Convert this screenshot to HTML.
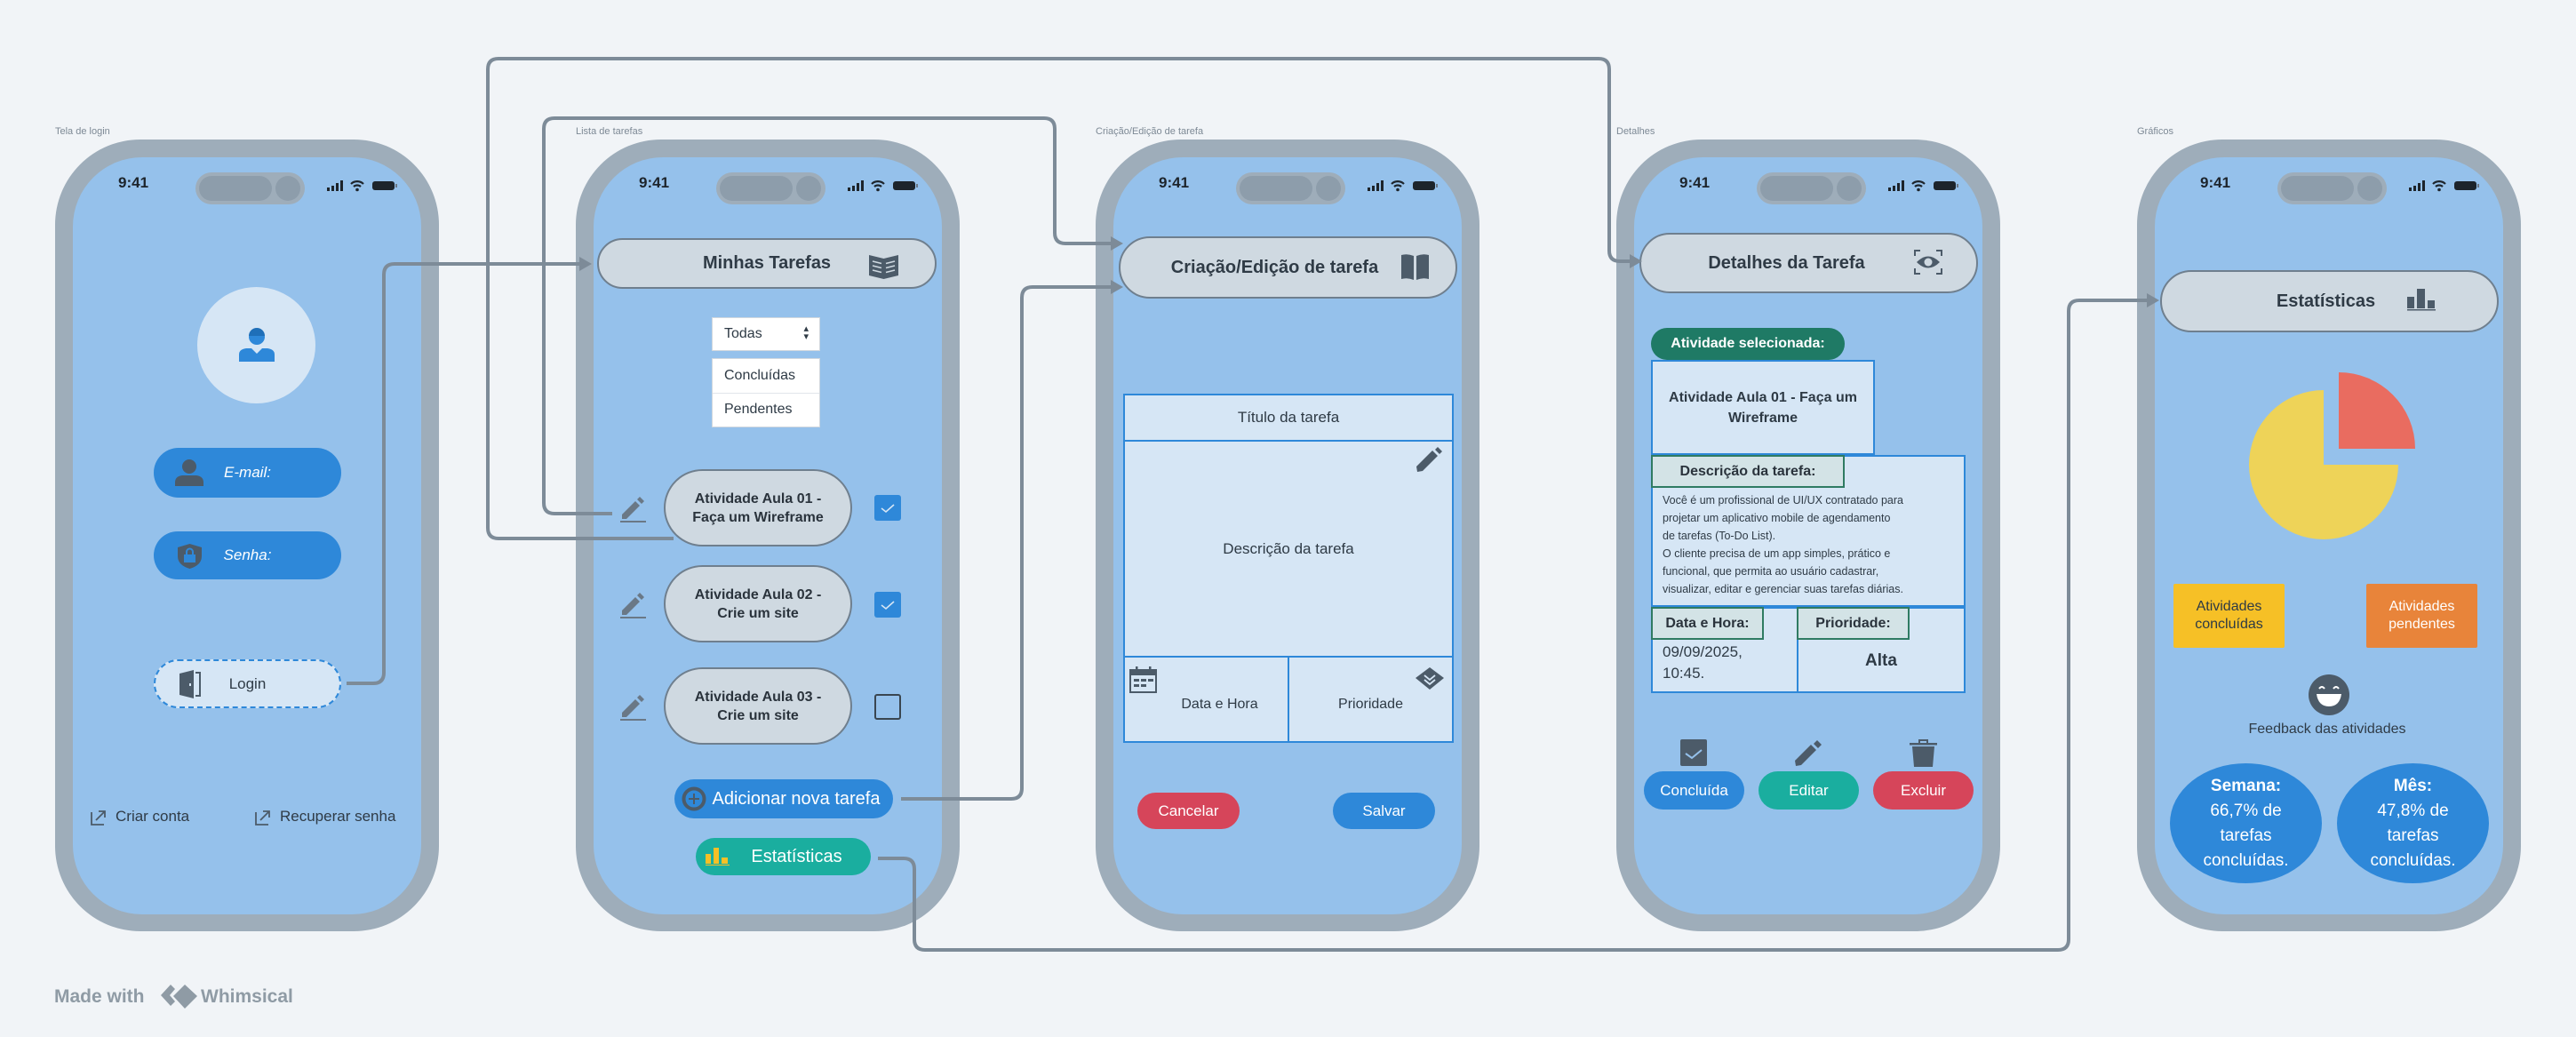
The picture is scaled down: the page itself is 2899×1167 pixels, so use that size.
<!DOCTYPE html>
<html><head><meta charset="utf-8">
<style>
*{margin:0;padding:0;box-sizing:border-box}
body{width:2899px;height:1167px;background:#f1f4f7;font-family:"Liberation Sans",sans-serif;position:relative;overflow:hidden;color:#2e3a45}
.lbl{position:absolute;font-size:11px;color:#7d8995;top:142px}
.ph{position:absolute;top:157px;width:432px;height:891px;background:#9eadba;border-radius:96px}
.sc{position:absolute;left:20px;top:20px;width:392px;height:852px;background:#95c1eb;border-radius:78px}
.a{position:absolute}
.time{position:absolute;left:71px;top:39px;font-size:17px;font-weight:bold;color:#1d242b}
.isl{position:absolute;left:158px;top:37px;width:123px;height:36px;background:#9eadba;border-radius:18px}
.isl i{position:absolute;top:4px;height:28px;background:#8d9dab;border-radius:14px}
.hdr{position:absolute;left:26px;background:#cfd9e1;border:2px solid #6f7f8e;border-radius:40px;font-weight:bold;font-size:20px;color:#2f3b46;display:flex;align-items:center;justify-content:center}
.pill{position:absolute;border-radius:30px;color:#fff;display:flex;align-items:center;justify-content:center;font-size:17px}
.task{position:absolute;left:99px;width:212px;height:87px;background:#cfd9e1;border:2px solid #6f7f8e;border-radius:44px;font-weight:bold;font-size:16px;text-align:center;display:flex;align-items:center;justify-content:center;line-height:21px;color:#2a333c}
.cb{position:absolute;left:336px;width:30px;height:29px;border-radius:3px;background:#2e88d9}
.box{position:absolute;background:#d6e6f5;border:2px solid #2e88d9}
.tl{position:absolute;background:#d3e3e6;border:2px solid #2f7b62;font-weight:bold;font-size:16px;display:flex;align-items:center;justify-content:center;color:#2a333c}
.c{display:flex;align-items:center;justify-content:center;text-align:center}
</style></head><body>

<div class="lbl" style="left:62px">Tela de login</div>
<div class="lbl" style="left:648px">Lista de tarefas</div>
<div class="lbl" style="left:1233px">Criação/Edição de tarefa</div>
<div class="lbl" style="left:1819px">Detalhes</div>
<div class="lbl" style="left:2405px">Gráficos</div>

<!-- status bar template repeated -->
<!-- PHONE 1 -->
<div class="ph" style="left:62px"><div class="sc"></div>
<div class="time">9:41</div><div class="isl"><i style="left:4px;width:82px"></i><i style="left:90px;width:28px"></i></div>
<svg class="a" style="left:306px;top:45px" width="80" height="14" viewBox="0 0 80 14"><rect x="0" y="9" width="3" height="4" fill="#1d242b"/><rect x="5" y="7" width="3" height="6" fill="#1d242b"/><rect x="10" y="4" width="3" height="9" fill="#1d242b"/><rect x="15" y="1" width="3" height="12" fill="#1d242b"/><path d="M27 5a10 10 0 0 1 14 0M30 8a6 6 0 0 1 8 0" stroke="#1d242b" stroke-width="2.2" fill="none"/><circle cx="34" cy="11.5" r="1.8" fill="#1d242b"/><rect x="51" y="2" width="25" height="10" rx="3" fill="#1d242b"/><rect x="77" y="5" width="2" height="4" fill="#6b7785"/></svg>
<div class="a" style="left:160px;top:166px;width:133px;height:131px;border-radius:50%;background:#d6e6f5"></div>
<svg class="a" style="left:207px;top:210px" width="40" height="40" viewBox="0 0 40 40"><circle cx="20" cy="12" r="9" fill="#2e88d9"/><path d="M11 11a9 9 0 0 1 18 0z" fill="#1f6fb8"/><path d="M0 40v-8q0-6 8-7h6l6 6 6-6h6q8 1 8 7v8z" fill="#2e88d9"/></svg>
<div class="pill" style="left:111px;top:347px;width:211px;height:56px;background:#2e88d9;font-style:italic">E-mail:</div>
<svg class="a" style="left:135px;top:360px" width="32" height="30" viewBox="0 0 32 30"><circle cx="16" cy="8" r="8" fill="#4c5b69"/><path d="M0 30v-4q0-7 8-8h16q8 1 8 8v4z" fill="#4c5b69"/></svg>
<div class="pill" style="left:111px;top:441px;width:211px;height:54px;background:#2e88d9;font-style:italic">Senha:</div>
<svg class="a" style="left:138px;top:455px" width="27" height="28" viewBox="0 0 27 28"><path d="M0 4l13.5-4 13.5 4v10q0 10-13.5 14Q0 24 0 14z" fill="#4c5b69"/><rect x="7" y="12" width="13" height="9" fill="#2e88d9"/><path d="M10 12v-3a3.5 3.5 0 0 1 7 0v3" stroke="#2e88d9" stroke-width="2" fill="none"/></svg>
<div class="pill" style="left:111px;top:585px;width:211px;height:55px;background:#d6e6f5;border:2px dashed #2e88d9;color:#2f3b46">Login</div>
<svg class="a" style="left:140px;top:597px" width="26" height="32" viewBox="0 0 26 32"><path d="M0 4l16-4v32L0 28z" fill="#4c5b69"/><rect x="11" y="15" width="2" height="3" fill="#d6e6f5"/><path d="M18 3h5v26h-5" stroke="#4c5b69" stroke-width="2" fill="none"/></svg>
<svg class="a" style="left:39px;top:753px" width="20" height="20" viewBox="0 0 20 20"><path d="M2 4v14h14" stroke="#4c5b69" stroke-width="1.8" fill="none"/><path d="M7 13l10-10M10 3h7v7" stroke="#4c5b69" stroke-width="1.8" fill="none"/></svg>
<div class="a" style="left:68px;top:752px;font-size:17px;color:#2f3b46">Criar conta</div>
<svg class="a" style="left:224px;top:753px" width="20" height="20" viewBox="0 0 20 20"><path d="M2 4v14h14" stroke="#4c5b69" stroke-width="1.8" fill="none"/><path d="M7 13l10-10M10 3h7v7" stroke="#4c5b69" stroke-width="1.8" fill="none"/></svg>
<div class="a" style="left:253px;top:752px;font-size:17px;color:#2f3b46">Recuperar senha</div>
</div>

<!-- PHONE 2 -->
<div class="ph" style="left:648px"><div class="sc"></div>
<div class="time">9:41</div><div class="isl"><i style="left:4px;width:82px"></i><i style="left:90px;width:28px"></i></div>
<svg class="a" style="left:306px;top:45px" width="80" height="14" viewBox="0 0 80 14"><rect x="0" y="9" width="3" height="4" fill="#1d242b"/><rect x="5" y="7" width="3" height="6" fill="#1d242b"/><rect x="10" y="4" width="3" height="9" fill="#1d242b"/><rect x="15" y="1" width="3" height="12" fill="#1d242b"/><path d="M27 5a10 10 0 0 1 14 0M30 8a6 6 0 0 1 8 0" stroke="#1d242b" stroke-width="2.2" fill="none"/><circle cx="34" cy="11.5" r="1.8" fill="#1d242b"/><rect x="51" y="2" width="25" height="10" rx="3" fill="#1d242b"/><rect x="77" y="5" width="2" height="4" fill="#6b7785"/></svg>
<div class="hdr" style="top:111px;width:382px;height:57px;left:24px">Minhas Tarefas</div>
<svg class="a" style="left:330px;top:127px" width="33" height="30" viewBox="0 0 33 30"><path d="M0 3l16.5 4 16.5-4v23l-16.5 4L0 26z" fill="#4c5b69"/><path d="M4 10l10 2.5M4 15l10 2.5M4 20l10 2.5M29 10l-10 2.5M29 15l-10 2.5M29 20l-10 2.5" stroke="#cfd9e1" stroke-width="1.6"/></svg>
<div class="a" style="left:153px;top:200px;width:122px;height:38px;background:#fff;border:1px solid #d0d7de;font-size:16px;padding:9px 0 0 13px">Todas<span style="position:absolute;right:12px;top:8px;font-size:11px;line-height:9px">▴<br>▾</span></div>
<div class="a" style="left:153px;top:246px;width:122px;height:78px;background:#fff;border:1px solid #d0d7de;font-size:16px"><div style="height:39px;border-bottom:1px solid #e1e5ea;padding:10px 0 0 13px">Concluídas</div><div style="padding:9px 0 0 13px">Pendentes</div></div>
<div class="task" style="top:371px">Atividade Aula 01 -<br>Faça um Wireframe</div>
<div class="task" style="top:479px">Atividade Aula 02 -<br>Crie um site</div>
<div class="task" style="top:594px">Atividade Aula 03 -<br>Crie um site</div>
<svg class="a" style="left:50px;top:400px" width="29" height="31" viewBox="0 0 29 31"><path d="M2 22v5h5L22 12l-5-5zM24 10l3-3-5-5-3 3z" fill="#6a7886"/><rect x="0" y="29" width="29" height="2" fill="#6a7886"/></svg>
<svg class="a" style="left:50px;top:508px" width="29" height="31" viewBox="0 0 29 31"><path d="M2 22v5h5L22 12l-5-5zM24 10l3-3-5-5-3 3z" fill="#6a7886"/><rect x="0" y="29" width="29" height="2" fill="#6a7886"/></svg>
<svg class="a" style="left:50px;top:623px" width="29" height="31" viewBox="0 0 29 31"><path d="M2 22v5h5L22 12l-5-5zM24 10l3-3-5-5-3 3z" fill="#6a7886"/><rect x="0" y="29" width="29" height="2" fill="#6a7886"/></svg>
<div class="cb" style="top:400px"><svg width="30" height="29"><path d="M8 15l5 4 9-8" stroke="#d6e6f5" stroke-width="1.6" fill="none"/></svg></div>
<div class="cb" style="top:509px"><svg width="30" height="29"><path d="M8 15l5 4 9-8" stroke="#d6e6f5" stroke-width="1.6" fill="none"/></svg></div>
<div class="cb" style="top:624px;background:none;border:2px solid #3a4650"></div>
<div class="pill" style="left:111px;top:720px;width:246px;height:44px;background:#2e88d9;font-size:20px;padding-left:28px">Adicionar nova tarefa</div>
<svg class="a" style="left:119px;top:728px" width="28" height="28" viewBox="0 0 28 28"><circle cx="14" cy="14" r="11.5" stroke="#4c5b69" stroke-width="4" fill="none"/><path d="M14 8v12M8 14h12" stroke="#4c5b69" stroke-width="2"/></svg>
<div class="pill" style="left:135px;top:786px;width:197px;height:42px;background:#1aae9f;font-size:20px;padding-left:30px">Estatísticas</div>
<svg class="a" style="left:146px;top:795px" width="27" height="22" viewBox="0 0 27 22"><rect x="0" y="9" width="6" height="11" fill="#f6c026"/><rect x="9" y="2" width="6" height="18" fill="#f6c026"/><rect x="18" y="13" width="7" height="7" fill="#f6c026"/><rect x="0" y="21" width="27" height="1.2" fill="#f6c026"/></svg>
</div>

<!-- PHONE 3 -->
<div class="ph" style="left:1233px"><div class="sc"></div>
<div class="time">9:41</div><div class="isl"><i style="left:4px;width:82px"></i><i style="left:90px;width:28px"></i></div>
<svg class="a" style="left:306px;top:45px" width="80" height="14" viewBox="0 0 80 14"><rect x="0" y="9" width="3" height="4" fill="#1d242b"/><rect x="5" y="7" width="3" height="6" fill="#1d242b"/><rect x="10" y="4" width="3" height="9" fill="#1d242b"/><rect x="15" y="1" width="3" height="12" fill="#1d242b"/><path d="M27 5a10 10 0 0 1 14 0M30 8a6 6 0 0 1 8 0" stroke="#1d242b" stroke-width="2.2" fill="none"/><circle cx="34" cy="11.5" r="1.8" fill="#1d242b"/><rect x="51" y="2" width="25" height="10" rx="3" fill="#1d242b"/><rect x="77" y="5" width="2" height="4" fill="#6b7785"/></svg>
<div class="hdr" style="top:109px;width:381px;height:70px;padding-right:30px">Criação/Edição de tarefa</div>
<svg class="a" style="left:343px;top:128px" width="33" height="30" viewBox="0 0 33 30"><path d="M1 2q7-2 14 1v27q-7-3-14-1zM18 3q7-3 14-1v27q-7-2-14 1z" fill="#4c5b69"/></svg>
<div class="box c" style="left:31px;top:286px;width:372px;height:54px;font-size:17px">Título da tarefa</div>
<div class="box c" style="left:31px;top:338px;width:372px;height:245px;font-size:17px">Descrição da tarefa</div>
<svg class="a" style="left:361px;top:346px" width="30" height="28" viewBox="0 0 30 28"><path d="M0 22l1 6 6-1L24 10l-6-6zM26 8l3-3-5-5-3 3z" fill="#4c5b69"/></svg>
<div class="box c" style="left:31px;top:581px;width:187px;height:98px;font-size:16px;padding:12px 0 0 30px">Data e Hora</div>
<div class="box c" style="left:216px;top:581px;width:187px;height:98px;font-size:16px;padding-top:12px">Prioridade</div>
<svg class="a" style="left:38px;top:593px" width="32" height="30" viewBox="0 0 32 30"><rect x="1" y="4" width="29" height="25" fill="none" stroke="#4c5b69" stroke-width="2"/><rect x="1" y="4" width="29" height="6" fill="#4c5b69"/><rect x="7" y="0" width="2.5" height="6" fill="#4c5b69"/><rect x="22" y="0" width="2.5" height="6" fill="#4c5b69"/><rect x="5" y="14" width="6" height="3" fill="#4c5b69"/><rect x="13" y="14" width="6" height="3" fill="#4c5b69"/><rect x="21" y="14" width="6" height="3" fill="#4c5b69"/><rect x="5" y="20" width="6" height="3" fill="#4c5b69"/><rect x="13" y="20" width="6" height="3" fill="#4c5b69"/></svg>
<svg class="a" style="left:360px;top:594px" width="32" height="30" viewBox="0 0 32 30"><path d="M16 0l16 12-16 13L0 12z" fill="#4c5b69"/><path d="M10 9l6 5 6-5M10 14l6 5 6-5" stroke="#d6e6f5" stroke-width="1.8" fill="none"/></svg>
<div class="pill" style="left:47px;top:735px;width:115px;height:41px;background:#d6455a">Cancelar</div>
<div class="pill" style="left:267px;top:735px;width:115px;height:41px;background:#2e88d9">Salvar</div>
</div>

<!-- PHONE 4 -->
<div class="ph" style="left:1819px"><div class="sc"></div>
<div class="time">9:41</div><div class="isl"><i style="left:4px;width:82px"></i><i style="left:90px;width:28px"></i></div>
<svg class="a" style="left:306px;top:45px" width="80" height="14" viewBox="0 0 80 14"><rect x="0" y="9" width="3" height="4" fill="#1d242b"/><rect x="5" y="7" width="3" height="6" fill="#1d242b"/><rect x="10" y="4" width="3" height="9" fill="#1d242b"/><rect x="15" y="1" width="3" height="12" fill="#1d242b"/><path d="M27 5a10 10 0 0 1 14 0M30 8a6 6 0 0 1 8 0" stroke="#1d242b" stroke-width="2.2" fill="none"/><circle cx="34" cy="11.5" r="1.8" fill="#1d242b"/><rect x="51" y="2" width="25" height="10" rx="3" fill="#1d242b"/><rect x="77" y="5" width="2" height="4" fill="#6b7785"/></svg>
<div class="hdr" style="top:105px;width:381px;height:68px;padding-right:50px">Detalhes da Tarefa</div>
<svg class="a" style="left:335px;top:123px" width="32" height="30" viewBox="0 0 32 30"><path d="M1 8V2h6M25 2h6v6M31 22v6h-6M7 28H1v-6" stroke="#4c5b69" stroke-width="2" fill="none"/><path d="M3 15q13-13 26 0-13 13-26 0z" fill="#4c5b69"/><circle cx="16" cy="15" r="4.5" fill="#cfd9e1"/></svg>
<div class="pill" style="left:39px;top:212px;width:218px;height:36px;background:#1f7a65;font-weight:bold;font-size:16px">Atividade selecionada:</div>
<div class="box c" style="left:39px;top:248px;width:252px;height:107px;font-weight:bold;font-size:16px;line-height:23px">Atividade Aula 01 - Faça um<br>Wireframe</div>
<div class="box" style="left:39px;top:355px;width:354px;height:171px"></div>
<div class="a" style="left:52px;top:396px;font-size:12.5px;line-height:20px;color:#2f3b46;white-space:nowrap">Você é um profissional de UI/UX contratado para<br>projetar um aplicativo mobile de agendamento<br>de tarefas (To-Do List).<br>O cliente precisa de um app simples, prático e<br>funcional, que permita ao usuário cadastrar,<br>visualizar, editar e gerenciar suas tarefas diárias.</div>
<div class="tl" style="left:39px;top:355px;width:218px;height:37px">Descrição da tarefa:</div>
<div class="box" style="left:39px;top:526px;width:166px;height:97px"></div>
<div class="box" style="left:203px;top:526px;width:190px;height:97px"></div>
<div class="tl" style="left:39px;top:526px;width:127px;height:37px">Data e Hora:</div>
<div class="tl" style="left:203px;top:526px;width:127px;height:37px">Prioridade:</div>
<div class="a" style="left:52px;top:565px;font-size:17px;line-height:24px;color:#2f3b46">09/09/2025,<br>10:45.</div>
<div class="a" style="left:203px;top:576px;width:190px;text-align:center;font-weight:bold;font-size:19px">Alta</div>
<svg class="a" style="left:72px;top:675px" width="30" height="30" viewBox="0 0 30 30"><rect width="30" height="30" rx="2" fill="#4c5b69"/><path d="M6 16l7 5 11-9" stroke="#95c1eb" stroke-width="2" fill="none"/></svg>
<svg class="a" style="left:201px;top:675px" width="31" height="30" viewBox="0 0 31 30"><path d="M0 24l1 6 6-1L24 12l-6-6zM26 10l4-4-5-5-4 4z" fill="#4c5b69"/></svg>
<svg class="a" style="left:330px;top:674px" width="31" height="32" viewBox="0 0 31 32"><rect x="0" y="5" width="31" height="2.5" fill="#4c5b69"/><path d="M11 5V2h9v3" stroke="#4c5b69" stroke-width="2" fill="none"/><path d="M3 9h25l-2 23H5z" fill="#4c5b69"/></svg>
<div class="pill" style="left:31px;top:711px;width:113px;height:43px;background:#2e88d9">Concluída</div>
<div class="pill" style="left:160px;top:711px;width:113px;height:43px;background:#1aae9f">Editar</div>
<div class="pill" style="left:289px;top:711px;width:113px;height:43px;background:#d6455a">Excluir</div>
</div>

<!-- PHONE 5 -->
<div class="ph" style="left:2405px"><div class="sc"></div>
<div class="time">9:41</div><div class="isl"><i style="left:4px;width:82px"></i><i style="left:90px;width:28px"></i></div>
<svg class="a" style="left:306px;top:45px" width="80" height="14" viewBox="0 0 80 14"><rect x="0" y="9" width="3" height="4" fill="#1d242b"/><rect x="5" y="7" width="3" height="6" fill="#1d242b"/><rect x="10" y="4" width="3" height="9" fill="#1d242b"/><rect x="15" y="1" width="3" height="12" fill="#1d242b"/><path d="M27 5a10 10 0 0 1 14 0M30 8a6 6 0 0 1 8 0" stroke="#1d242b" stroke-width="2.2" fill="none"/><circle cx="34" cy="11.5" r="1.8" fill="#1d242b"/><rect x="51" y="2" width="25" height="10" rx="3" fill="#1d242b"/><rect x="77" y="5" width="2" height="4" fill="#6b7785"/></svg>
<div class="hdr" style="top:147px;width:381px;height:70px;padding-right:8px">Estatísticas</div>
<svg class="a" style="left:304px;top:165px" width="32" height="28" viewBox="0 0 32 28"><rect x="0" y="12" width="8" height="13" fill="#4c5b69"/><rect x="11" y="3" width="9" height="22" fill="#4c5b69"/><rect x="23" y="16" width="8" height="9" fill="#4c5b69"/><rect x="0" y="26" width="32" height="1.5" fill="#4c5b69"/></svg>
<svg class="a" style="left:0;top:0" width="432" height="500"><path d="M210 366V282A84 84 0 1 0 294 366Z" fill="#eed358"/><path d="M227 348V262A86 86 0 0 1 313 348Z" fill="#e96c60"/></svg>
<div class="a c" style="left:41px;top:500px;width:125px;height:72px;background:#f6c026;font-size:16px;line-height:20px;border-radius:2px">Atividades<br>concluídas</div>
<div class="a c" style="left:258px;top:500px;width:125px;height:72px;background:#e8843a;color:#fff;font-size:16px;line-height:20px;border-radius:2px">Atividades<br>pendentes</div>
<svg class="a" style="left:193px;top:602px" width="46" height="46" viewBox="0 0 46 46"><circle cx="23" cy="23" r="23" fill="#4c5b69"/><path d="M9 22h28q-2 14-14 14T9 22z" fill="#fff"/><path d="M12 16q3-4 6 0M28 16q3-4 6 0" stroke="#fff" stroke-width="2" fill="none"/></svg>
<div class="a" style="left:0;top:655px;width:428px;text-align:center;font-size:16px;color:#2f3b46">Feedback das atividades</div>
<div class="a c" style="left:37px;top:702px;width:171px;height:135px;border-radius:50%;background:#2e88d9;color:#fff;font-size:19px;line-height:28px">
<div><b>Semana:</b><br>66,7% de<br>tarefas<br>concluídas.</div></div>
<div class="a c" style="left:225px;top:702px;width:171px;height:135px;border-radius:50%;background:#2e88d9;color:#fff;font-size:19px;line-height:28px">
<div><b>Mês:</b><br>47,8% de<br>tarefas<br>concluídas.</div></div>
</div>

<!-- CONNECTORS -->
<svg class="a" style="left:0;top:0" width="2899" height="1167">
<g stroke="#7d8b98" stroke-width="4" fill="none" stroke-linejoin="round">
<path d="M390 769H420Q432 769 432 757V309Q432 297 444 297H655"/>
<path d="M758 606H561Q549 606 549 594V78Q549 66 561 66H1799Q1811 66 1811 78V282Q1811 294 1823 294H1838"/>
<path d="M689 578H624Q612 578 612 566V145Q612 133 624 133H1175Q1187 133 1187 145V262Q1187 274 1199 274H1253"/>
<path d="M1014 899H1138Q1150 899 1150 887V335Q1150 323 1162 323H1253"/>
<path d="M988 966H1017Q1029 966 1029 978V1057Q1029 1069 1041 1069H2316Q2328 1069 2328 1057V350Q2328 338 2340 338H2420"/>
</g>
<g fill="#7d8b98">
<path d="M652 289L666 297L652 305Z"/>
<path d="M1834 286L1848 294L1834 302Z"/>
<path d="M1250 266L1264 274L1250 282Z"/>
<path d="M1250 315L1264 323L1250 331Z"/>
<path d="M2416 330L2430 338L2416 346Z"/>
</g>
</svg>

<!-- logo -->
<div class="a" style="left:61px;top:1110px;font-size:21px;font-weight:bold;color:#8f9ba5">Made with</div>
<svg class="a" style="left:180px;top:1107px" width="44" height="30" viewBox="0 0 44 30"><path d="M12 1L1 13l11 12 5-5-6-7 6-7z" fill="#8f9ba5"/><path d="M28 1l14 13-14 14-13-14z" fill="#8f9ba5"/></svg>
<div class="a" style="left:226px;top:1110px;font-size:21px;font-weight:bold;color:#8f9ba5">Whimsical</div>
</body></html>
